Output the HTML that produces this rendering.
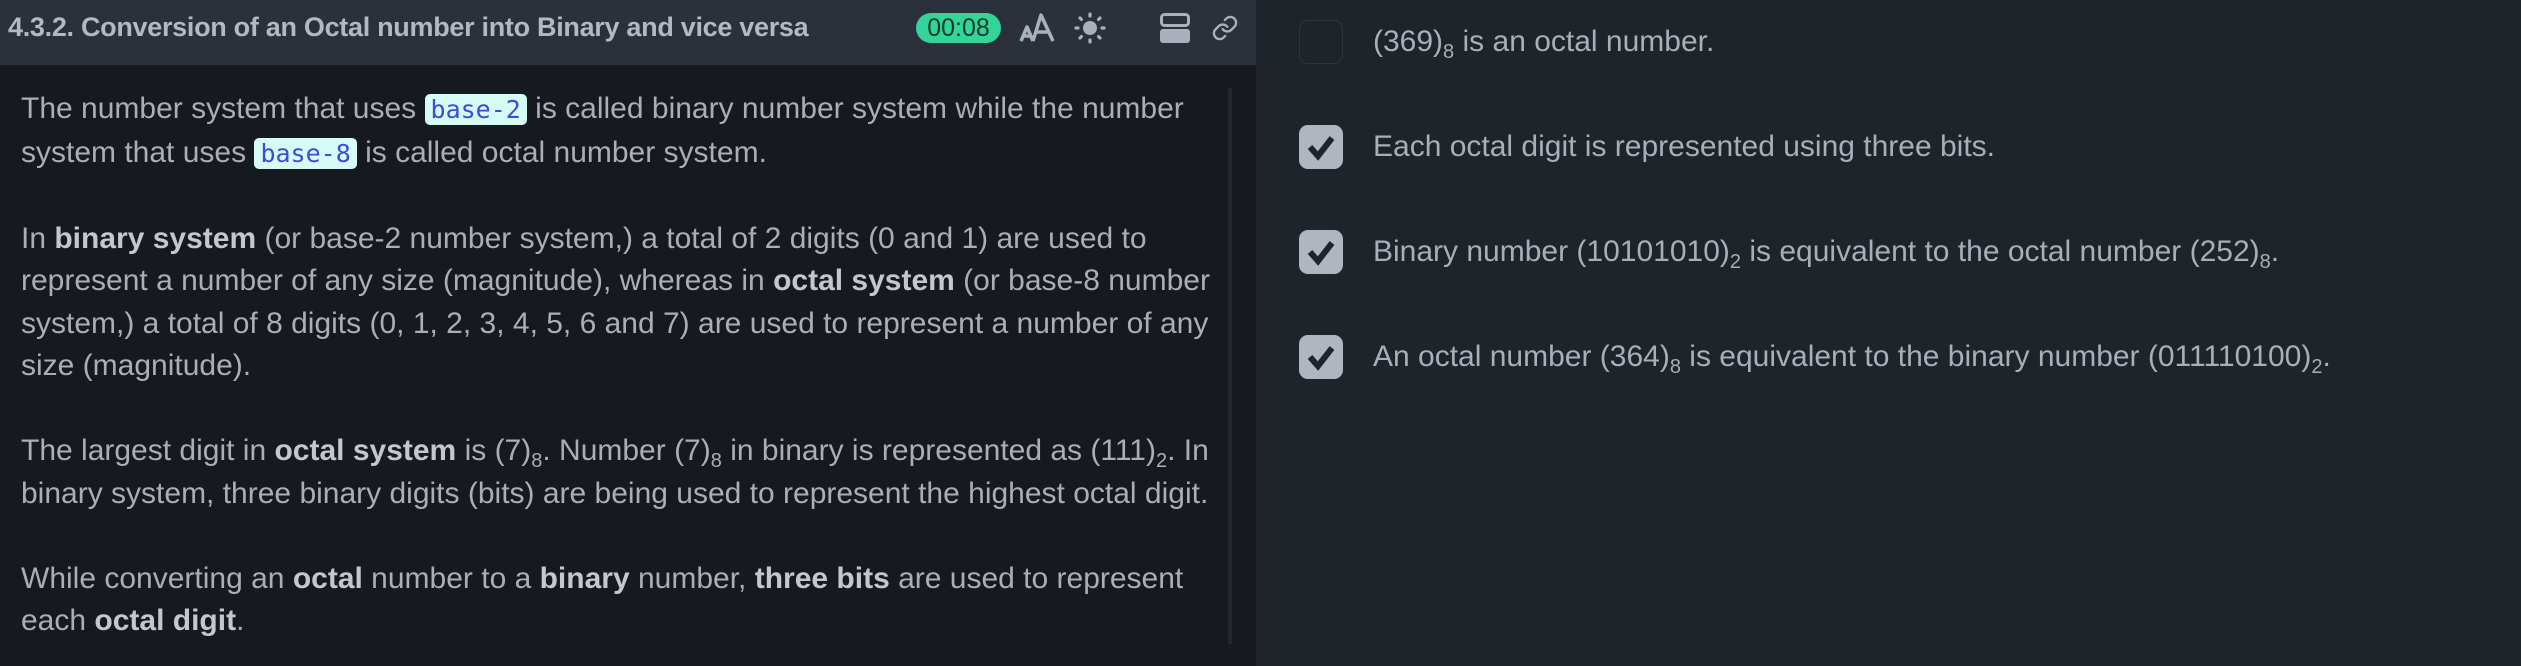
<!DOCTYPE html>
<html style="width:2521px;height:666px;overflow:hidden"><head><meta charset="utf-8"><style>
*{margin:0;padding:0;box-sizing:border-box}
body{width:2521px;height:666px;overflow:hidden;background:#1f232a;font-family:"Liberation Sans",sans-serif;position:relative}
#left{position:absolute;left:0;top:0;width:1256px;height:666px;background:#16191e;overflow:hidden}
#hdr{position:absolute;left:0;top:0;width:1256px;height:65px;background:#2b313b}
#title{position:absolute;left:8px;top:12px;font-size:27px;font-weight:bold;color:#b3b8c2;letter-spacing:-0.3px}
#pill{position:absolute;left:916px;top:13px;width:85px;height:30px;border-radius:15px;background:#34d399;color:#0d3b2a;font-size:25px;text-align:center;line-height:30px}
.ic{position:absolute}
#content{position:absolute;left:21px;top:88px;width:1200px;font-size:30px;line-height:42.5px;color:#a9aeb8}
#content p{margin-bottom:42.5px}
#content p:last-child{margin-bottom:0}
#content b{color:#c3c7cf}
code{font-family:"DejaVu Sans Mono",monospace;font-size:25px;background:#d6fbf6;color:#3b4bdb;border-radius:5px;padding:1px 6px}
sub{font-size:20px;vertical-align:-7px;line-height:0}
#scroll{position:absolute;left:1228px;top:88px;width:4px;height:556px;background:#23272e}
.row{position:absolute;left:1299px;height:44px;width:1200px}
.cb{position:absolute;left:0;top:0;width:44px;height:44px;border-radius:9px;background:#b0b5c0}
.cb.off{background:transparent;border:1.5px solid #2f343c}
.row span.t{position:absolute;left:74px;top:5px;font-size:30px;color:#a9aeb8;white-space:nowrap}
</style></head><body>
<div id="left">
<div id="hdr">
<div id="title">4.3.2. Conversion of an Octal number into Binary and vice versa</div>
<div id="pill">00:08</div>
<svg class="ic" style="left:1019px;top:13px" width="36" height="30" viewBox="0 0 36 30"><path d="M2 28 L8 14 L14 28 M4.5 23 H11.5 M14 28 L22 2 L34 28 M17 19 H30" stroke="#aab0bc" stroke-width="3.5" fill="none" stroke-linejoin="round"/></svg>
<svg class="ic" style="left:1074px;top:12px" width="32" height="32" viewBox="0 0 32 32" fill="#aab0bc"><circle cx="16" cy="16" r="7"/><g stroke="#aab0bc" stroke-width="3.2" stroke-linecap="round"><path d="M16 2v2M16 28v2M2 16h2M28 16h2M6 6l1.4 1.4M24.6 24.6L26 26M6 26l1.4-1.4M24.6 7.4L26 6"/></g></svg>
<svg class="ic" style="left:1160px;top:13px" width="30" height="30" viewBox="0 0 30 30"><rect x="1.5" y="1.5" width="27" height="11" rx="3" stroke="#aab0bc" stroke-width="3" fill="none"/><rect x="0" y="16" width="30" height="14" rx="3" fill="#aab0bc"/></svg>
<svg class="ic" style="left:1211px;top:14px" width="28" height="28" viewBox="0 0 24 24" fill="none" stroke="#aab0bc" stroke-width="2" stroke-linecap="round"><path d="M10 13a5 5 0 0 0 7.5.5l3-3a5 5 0 0 0-7-7l-1.7 1.7"/><path d="M14 11a5 5 0 0 0-7.5-.5l-3 3a5 5 0 0 0 7 7l1.7-1.7"/></svg>
</div>
<div id="content">
<p>The number system that uses <code>base-2</code> is called binary number system while the number system that uses <code>base-8</code> is called octal number system.</p>
<p>In <b>binary system</b> (or base-2 number system,) a total of 2 digits (0 and 1) are used to represent a number of any size (magnitude), whereas in <b>octal system</b> (or base-8 number system,) a total of 8 digits (0, 1, 2, 3, 4, 5, 6 and 7) are used to represent a number of any size (magnitude).</p>
<p>The largest digit in <b>octal system</b> is (7)<sub>8</sub>. Number (7)<sub>8</sub> in binary is represented as (111)<sub>2</sub>. In binary system, three binary digits (bits) are being used to represent the highest octal digit.</p>
<p>While converting an <b>octal</b> number to a <b>binary</b> number, <b>three bits</b> are used to represent each <b>octal digit</b>.</p>
</div>
<div id="scroll"></div>
</div>
<div class="row" style="top:20px"><div class="cb off"></div><span class="t">(369)<sub>8</sub> is an octal number.</span></div>
<div class="row" style="top:125px"><div class="cb"><svg width="44" height="44" viewBox="0 0 44 44"><path d="M11 22 L19 31 L33 13" stroke="#1f232a" stroke-width="6" fill="none"/></svg></div><span class="t">Each octal digit is represented using three bits.</span></div>
<div class="row" style="top:230px"><div class="cb"><svg width="44" height="44" viewBox="0 0 44 44"><path d="M11 22 L19 31 L33 13" stroke="#1f232a" stroke-width="6" fill="none"/></svg></div><span class="t">Binary number (10101010)<sub>2</sub> is equivalent to the octal number (252)<sub>8</sub>.</span></div>
<div class="row" style="top:335px"><div class="cb"><svg width="44" height="44" viewBox="0 0 44 44"><path d="M11 22 L19 31 L33 13" stroke="#1f232a" stroke-width="6" fill="none"/></svg></div><span class="t">An octal number (364)<sub>8</sub> is equivalent to the binary number (011110100)<sub>2</sub>.</span></div>
</body></html>
